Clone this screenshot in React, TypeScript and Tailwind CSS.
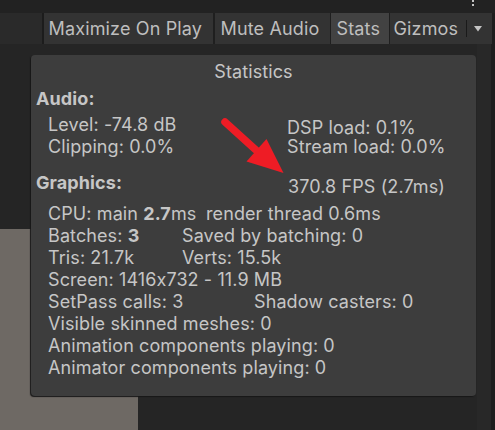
import React from "react";

const F = { fontFamily: "Inter, 'Noto Sans', sans-serif" };

function Line({ children, className = "" }: { children: React.ReactNode; className?: string }) {
  return <div className={"h-[22px] leading-[22px] whitespace-nowrap " + className}>{children}</div>;
}

export default function App() {
  return (
    <div
      className="w-[495px] h-[430px] overflow-hidden bg-[#252525] flex flex-col [font-feature-settings:'calt'_0]"
      style={F}
    >
      {/* top strip */}
      <div className="h-[13px] bg-[#222222] relative shrink-0">
        <div className="absolute left-[472px] top-0 w-[2px] h-[2px] bg-[#c4c4c4]" />
        <div className="absolute left-[472px] top-[4px] w-[2px] h-[2px] bg-[#c4c4c4]" />
      </div>
      {/* toolbar */}
      <div className="h-[31px] flex bg-[#2a2a2a] shrink-0 text-[18px] tracking-[0.15px] text-[#bebebe] leading-[31px]">
        <div className="w-[42px] shrink-0" />
        <div className="w-[1.5px] bg-[#1c1c1c]" />
        <div className="w-[169px] bg-[#333333] pl-[5px] whitespace-nowrap">Maximize On Play</div>
        <div className="w-[2px] bg-[#1f1f1f]" />
        <div className="w-[115px] bg-[#333333] pl-[6px] whitespace-nowrap">Mute Audio</div>
        <div className="w-[1px] bg-[#1f1f1f]" />
        <div className="w-[58px] bg-[#424242] pl-[6px] whitespace-nowrap">Stats</div>
        <div className="w-[1px] bg-[#1f1f1f]" />
        <div className="w-[102px] bg-[#333333] flex items-center whitespace-nowrap">
          <span className="pl-[4px] w-[76px]">Gizmos</span>
          <div className="w-[1.5px] h-[17px] bg-[#1a1a1a]" />
          <svg width="8" height="6" viewBox="0 0 8 6" className="ml-[7px]">
            <polygon points="0,0 8,0 4,5.5" fill="#c4c4c4" />
          </svg>
        </div>
        <div className="flex-1 bg-[#1e1e1e]" />
      </div>
      {/* content */}
      <div className="flex-1 relative flex">
        <div className="flex-1 flex flex-col">
          <div className="flex-1" />
          <div className="h-[201px] w-[138px] bg-[#6e6964]" />
        </div>
        <div className="w-[14px] bg-[#282828]" />
        <div className="w-[4px] bg-[#1e1e1e]" />

        {/* stats overlay */}
        <div className="absolute left-[31px] top-[11px] w-[445px] h-[341px] bg-[#3d3d3d] rounded-[4px] shadow-[-1px_1px_1px_#181818] text-[18px] tracking-[0.1px] text-[#c6c6c6] pt-[6px]">
          <Line className="text-center">Statistics</Line>

          <div className="mt-[5px] flex">
            <div className="w-[252px] shrink-0 pl-[5px]">
              <Line className="font-bold">Audio:</Line>
              <div className="mt-[4px] pl-[12px]">
                <Line>Level: -74.8 dB</Line>
                <Line>Clipping: 0.0%</Line>
              </div>
            </div>
            <div className="pt-[30px] pl-[4px]">
              <div className="h-[19px] leading-[19px] whitespace-nowrap">DSP load: 0.1%</div>
              <div className="h-[19px] leading-[19px] whitespace-nowrap">Stream load: 0.0%</div>
            </div>
          </div>

          <div className="mt-[14px] flex">
            <Line className="w-[252px] shrink-0 pl-[5px] font-bold">Graphics:</Line>
            <Line className="mt-[4px] pl-[5px]">370.8 FPS (2.7ms)</Line>
          </div>

          <div className="mt-[5px] pl-[17px]">
            <Line className="flex">
              <span className="w-[158px] shrink-0">
                CPU: main <b className="font-bold">2.7</b>ms
              </span>
              <span>render thread 0.6ms</span>
            </Line>
            <Line className="flex">
              <span className="w-[134px] shrink-0">
                Batches: <b className="font-bold">3</b>
              </span>
              <span>Saved by batching: 0</span>
            </Line>
            <Line className="flex">
              <span className="w-[134px] shrink-0">Tris: 21.7k</span>
              <span>Verts: 15.5k</span>
            </Line>
            <Line>Screen: 1416x732 - 11.9 MB</Line>
            <Line className="flex">
              <span className="w-[206px] shrink-0">SetPass calls: 3</span>
              <span>Shadow casters: 0</span>
            </Line>
            <Line>Visible skinned meshes: 0</Line>
            <Line>Animation components playing: 0</Line>
            <Line>Animator components playing: 0</Line>
          </div>

          {/* red arrow */}
          <svg className="absolute left-0 top-0 pointer-events-none" width="445" height="341" viewBox="0 0 445 341">
            <line x1="194" y1="67" x2="226" y2="96" stroke="#ee1c25" strokeWidth="7.5" strokeLinecap="round" />
            <polygon points="215.5,106.5 235.5,84 252.5,118" fill="#ee1c25" />
          </svg>
        </div>
      </div>
    </div>
  );
}
